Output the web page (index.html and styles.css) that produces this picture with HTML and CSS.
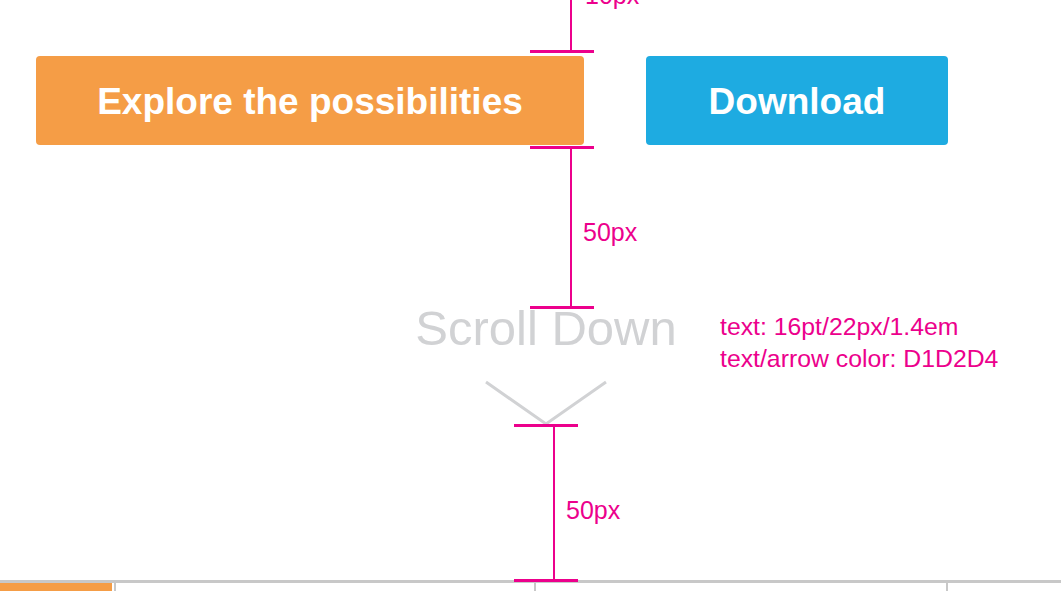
FILE: index.html
```html
<!DOCTYPE html>
<html>
<head>
<meta charset="utf-8">
<link rel="stylesheet" href="styles.css">
</head>
<body>
<div class="page">
  <div class="actions">
    <a class="btn btn-explore">Explore the possibilities</a>
    <a class="btn btn-download">Download</a>
  </div>
  <div class="scroll">
    <div class="scroll-text">Scroll Down</div>
    <svg class="scroll-arrow" width="124" height="46" viewBox="0 0 124 46">
      <polyline points="2,2 62,44 122,2" fill="none" stroke="#D1D2D4" stroke-width="3"/>
    </svg>
  </div>
  <div class="bottom">
    <div class="cell cell-active"></div>
    <div class="cell cell-a"></div>
    <div class="cell cell-b"></div>
    <div class="cell cell-c"></div>
  </div>

  <svg class="measures" width="1061" height="591" viewBox="0 0 1061 591">
    <g stroke="#EC008C" fill="none">
      <line x1="571" y1="0" x2="571" y2="52" stroke-width="2"/>
      <line x1="530" y1="51.5" x2="594" y2="51.5" stroke-width="3"/>
      <line x1="530" y1="147.5" x2="594" y2="147.5" stroke-width="3"/>
      <line x1="571" y1="147" x2="571" y2="307" stroke-width="2"/>
      <line x1="530" y1="307.5" x2="594" y2="307.5" stroke-width="3"/>
      <line x1="514" y1="425.5" x2="578" y2="425.5" stroke-width="3"/>
      <line x1="554" y1="425" x2="554" y2="580" stroke-width="2"/>
      <line x1="514" y1="580.5" x2="578" y2="580.5" stroke-width="3"/>
    </g>
  </svg>
  <span class="note note-top">10px</span>
  <span class="note note-mid">50px</span>
  <span class="note note-low">50px</span>
  <div class="note note-spec">text: 16pt/22px/1.4em<br>text/arrow color: D1D2D4</div>
</div>
</body>
</html>
```

FILE: styles.css
```css
html, body {
  margin: 0;
  padding: 0;
  background: #fff;
}
.page {
  position: relative;
  width: 1061px;
  height: 591px;
  overflow: hidden;
  background: #fff;
  font-family: "Liberation Sans", Arial, sans-serif;
}
.actions {
  display: flex;
  gap: 62px;
  padding: 56px 0 0 36px;
}
.btn {
  height: 89px;
  border-radius: 4px;
  display: flex;
  align-items: center;
  justify-content: center;
  color: #fff;
  font-weight: bold;
  font-size: 37px;
  padding-top: 2px;
  box-sizing: border-box;
  text-decoration: none;
}
.btn-explore {
  width: 548px;
  background: #F59D46;
}
.btn-download {
  width: 302px;
  background: #1EABE1;
}
.scroll {
  display: flex;
  flex-direction: column;
  align-items: center;
  width: 300px;
  margin: 153px 0 0 396px;
}
.scroll-text {
  font-size: 49px;
  line-height: 60px;
  color: #D1D2D4;
  white-space: nowrap;
}
.scroll-arrow {
  display: block;
  margin-top: 22px;
}
.bottom {
  display: flex;
  margin-top: 154px;
  border-top: 3px solid #C8C8C8;
  height: 20px;
}
.cell {
  height: 100%;
}
.cell-active {
  width: 112px;
  background: #F59D46;
}
.cell-a {
  width: 418px;
  margin-left: 2px;
  border-left: 2px solid #C8C8C8;
}
.cell-b {
  width: 410px;
  border-left: 2px solid #C8C8C8;
}
.cell-c {
  flex: 1;
  border-left: 2px solid #C8C8C8;
}
.measures {
  position: absolute;
  left: 0;
  top: 0;
  pointer-events: none;
}
.note {
  position: absolute;
  color: #EC008C;
  font-size: 25px;
  line-height: 25px;
  white-space: nowrap;
}
.note-top {
  left: 585px;
  top: -17px;
}
.note-mid {
  left: 583px;
  top: 220px;
}
.note-low {
  left: 566px;
  top: 498px;
}
.note-spec {
  left: 720px;
  top: 311px;
  font-size: 24.8px;
  line-height: 32px;
}
```
